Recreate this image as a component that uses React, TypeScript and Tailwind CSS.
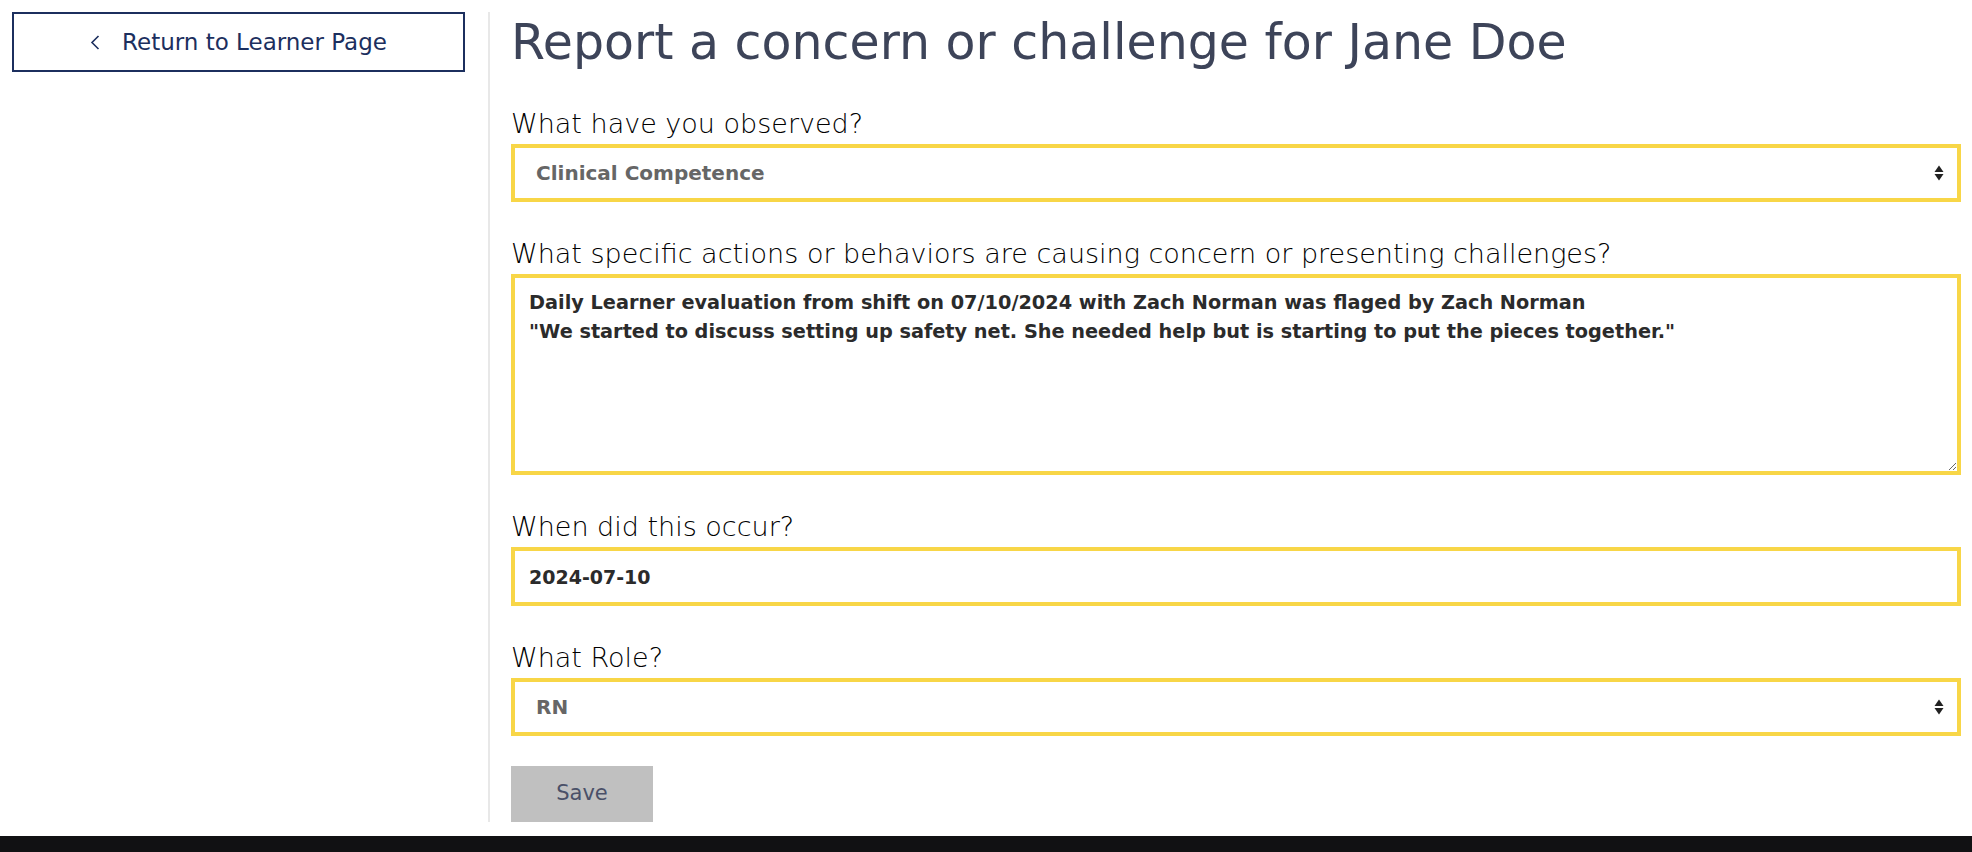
import { useState } from 'react'

const fieldBorder = 'w-full border-4 border-[#f8d647] bg-white outline-none'

function SelectArrows() {
  return (
    <svg
      aria-hidden="true"
      className="pointer-events-none absolute top-1/2 right-[17px] -translate-y-1/2"
      height="17"
      viewBox="0 0 10 17"
      width="10"
    >
      <path d="M5 1 L9.5 7.5 L0.5 7.5 Z" fill="#222222" />
      <path d="M5 16 L9.5 9.5 L0.5 9.5 Z" fill="#222222" />
    </svg>
  )
}

interface FieldProps {
  label: string
  children: React.ReactNode
  last?: boolean
}

function Field({ label, children, last }: FieldProps) {
  return (
    <div className={last ? 'mb-[30px]' : 'mb-8'}>
      <label className="block text-[27px] leading-[40px] font-light text-black">
        {label}
      </label>
      {children}
    </div>
  )
}

export default function App() {
  const [observed, setObserved] = useState('clinical')
  const [role, setRole] = useState('rn')
  const [details, setDetails] = useState(
    'Daily Learner evaluation from shift on 07/10/2024 with Zach Norman was flaged by Zach Norman\n"We started to discuss setting up safety net. She needed help but is starting to put the pieces together."',
  )
  const [date, setDate] = useState('2024-07-10')

  return (
    <div
      className="min-h-screen bg-white"
      style={{ fontFamily: '"DejaVu Sans", "Open Sans", sans-serif' }}
    >
      <div className="flex pt-3 pb-[14px]">
        <aside className="w-[488px] shrink-0 pl-3">
          <button
            className="flex h-[60px] w-[453px] items-center justify-center gap-[22px] border-2 border-[#1c2f5e] bg-white text-[23px] text-[#1c2f5e]"
            type="button"
          >
            <svg
              aria-hidden="true"
              height="15"
              viewBox="0 0 10 15"
              width="10"
            >
              <path
                d="M8.5 1 L2 7.5 L8.5 14"
                fill="none"
                stroke="#1c2f5e"
                strokeWidth="1.6"
              />
            </svg>
            Return to Learner Page
          </button>
        </aside>

        <main className="flex-1 border-l-2 border-[#e8e8e8] pr-[11px] pl-[21px]">
          <h1 className="mb-[30px] text-[49px] leading-[62px] text-[#3d4459]">
            Report a concern or challenge for Jane Doe
          </h1>

          <Field label="What have you observed?">
            <div className="relative">
              <select
                className={`${fieldBorder} h-[58px] appearance-none px-[21px] text-[20px] font-bold text-[#666666]`}
                onChange={(event) => setObserved(event.target.value)}
                value={observed}
              >
                <option value="clinical">Clinical Competence</option>
                <option value="professional">Professionalism</option>
                <option value="communication">Communication</option>
              </select>
              <SelectArrows />
            </div>
          </Field>

          <Field label="What specific actions or behaviors are causing concern or presenting challenges?">
            <textarea
              className={`${fieldBorder} block h-[201px] px-[14px] py-[10px] text-[19.3px] leading-[29px] font-bold text-[#2b2b2b]`}
              onChange={(event) => setDetails(event.target.value)}
              value={details}
            />
          </Field>

          <Field label="When did this occur?">
            <input
              className={`${fieldBorder} h-[59px] px-[14px] text-[19px] font-bold text-[#2b2b2b]`}
              onChange={(event) => setDate(event.target.value)}
              type="text"
              value={date}
            />
          </Field>

          <Field label="What Role?" last>
            <div className="relative">
              <select
                className={`${fieldBorder} h-[58px] appearance-none px-[21px] text-[20px] font-bold text-[#666666]`}
                onChange={(event) => setRole(event.target.value)}
                value={role}
              >
                <option value="rn">RN</option>
                <option value="lpn">LPN</option>
                <option value="cna">CNA</option>
              </select>
              <SelectArrows />
            </div>
          </Field>

          <button
            className="h-[56px] w-[142px] bg-[#c0c0c0] text-[21px] text-[#4a5068]"
            type="button"
          >
            Save
          </button>
        </main>
      </div>
      <footer className="h-[17px] bg-[#111113]" />
    </div>
  )
}
